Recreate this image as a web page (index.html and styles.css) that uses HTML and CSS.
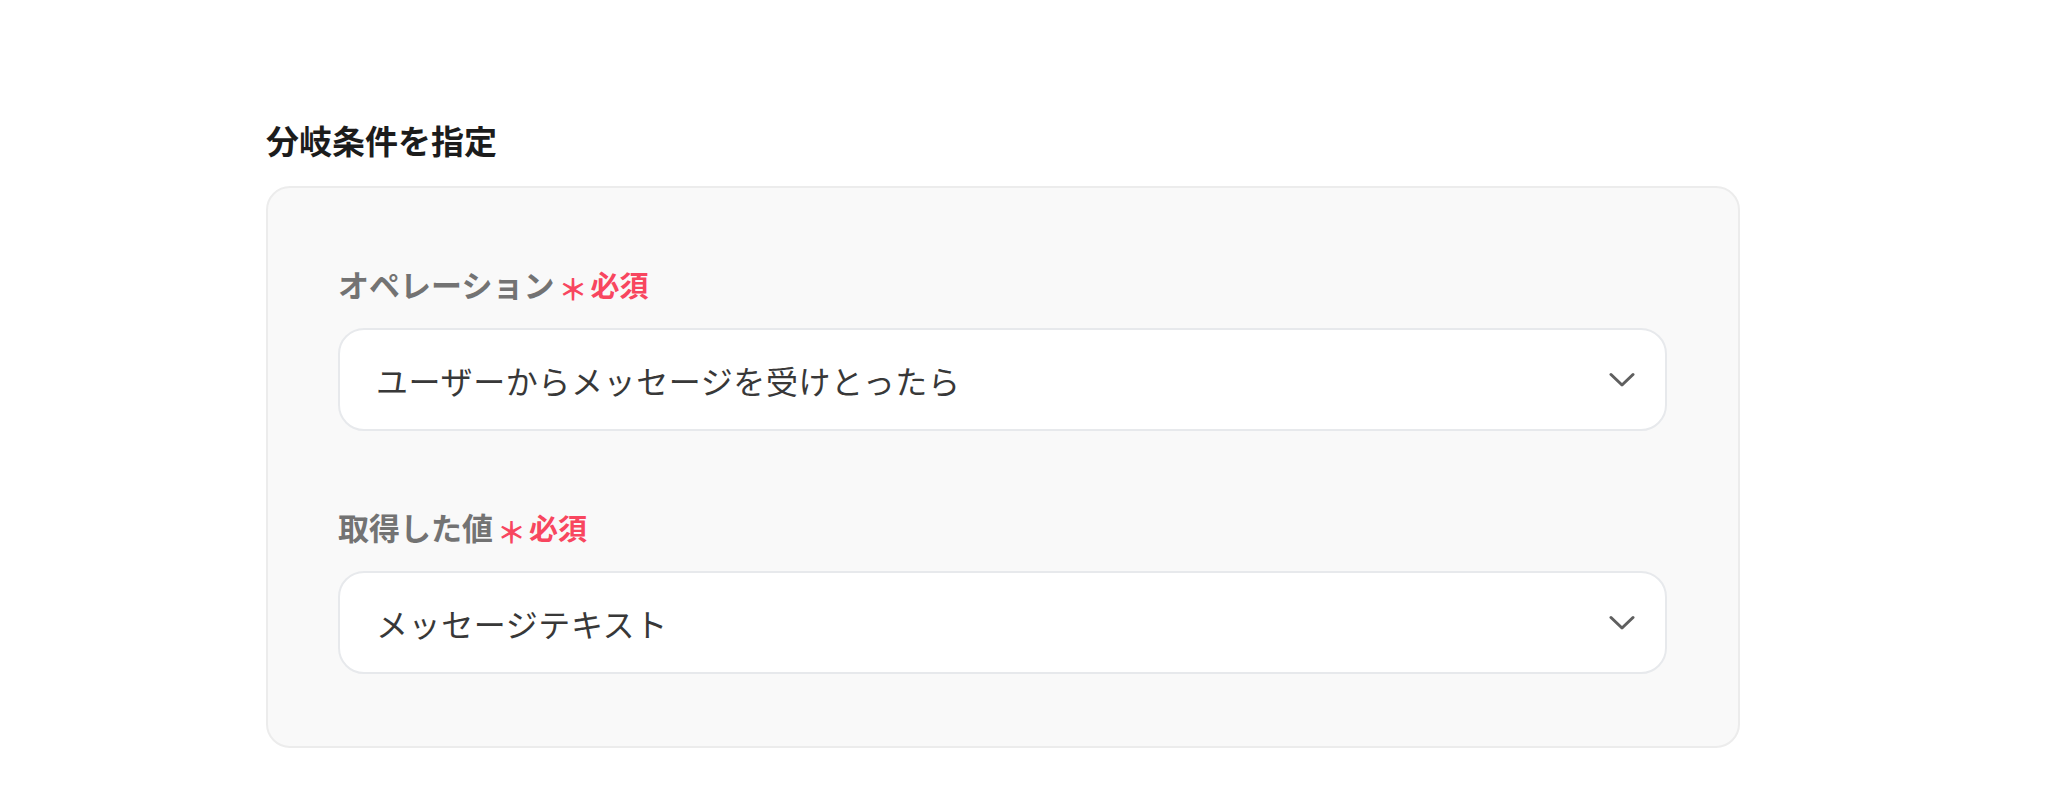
FILE: index.html
```html
<!DOCTYPE html>
<html lang="ja">
<head>
<meta charset="utf-8">
<title>分岐条件を指定</title>
<link rel="stylesheet" href="styles.css">
</head>
<body>
<main class="page">
  <h2 class="section-title">分岐条件を指定</h2>
  <section class="card">
    <div class="field">
      <label class="field-label">オペレーション<span class="req-mark">＊</span><span class="req-text">必須</span></label>
      <div class="select">
        <span class="select-value">ユーザーからメッセージを受けとったら</span>
        <svg class="chevron" width="26" height="16" viewBox="0 0 26 16"><path d="M2 2.5 L13 13 L24 2.5" fill="none" stroke="#5f5f5f" stroke-width="3" stroke-linecap="round" stroke-linejoin="round"/></svg>
      </div>
    </div>
    <div class="field">
      <label class="field-label">取得した値<span class="req-mark">＊</span><span class="req-text">必須</span></label>
      <div class="select">
        <span class="select-value">メッセージテキスト</span>
        <svg class="chevron" width="26" height="16" viewBox="0 0 26 16"><path d="M2 2.5 L13 13 L24 2.5" fill="none" stroke="#5f5f5f" stroke-width="3" stroke-linecap="round" stroke-linejoin="round"/></svg>
      </div>
    </div>
  </section>
</main>
</body>
</html>
```
FILE: styles.css
```css
html, body {
  margin: 0;
  padding: 0;
  background: #ffffff;
}
body {
  font-family: "Noto Sans CJK JP", "Noto Sans", sans-serif;
}
.page {
  padding: 118px 0 0 266px;
  width: 1474px;
}
.section-title {
  margin: 0 0 24px 0;
  font-size: 33px;
  line-height: 44px;
  font-weight: 700;
  color: #1c1c1c;
}
.card {
  box-sizing: border-box;
  width: 1474px;
  background: #f9f9f9;
  border: 2px solid #ececec;
  border-radius: 24px;
  padding: 76px 71px 72px 70px;
  display: flex;
  flex-direction: column;
  gap: 76px;
}
.field {
  display: flex;
  flex-direction: column;
  gap: 24px;
}
.field-label {
  display: flex;
  align-items: center;
  height: 40px;
  font-size: 31px;
  line-height: 40px;
  font-weight: 700;
  color: #737373;
}
.req-mark {
  color: #f8465f;
  font-size: 29px;
  line-height: 1;
  font-weight: 700;
  margin-left: 4px;
  margin-top: 8px;
}
.req-text {
  color: #f8465f;
  font-size: 29px;
  font-weight: 700;
  margin-left: 3px;
}
.select {
  box-sizing: border-box;
  height: 103px;
  background: #ffffff;
  border: 2px solid #e7e9ec;
  border-radius: 26px;
  display: flex;
  align-items: center;
  justify-content: space-between;
  padding: 0 30px 0 36px;
}
.select-value {
  font-size: 32px;
  line-height: 40px;
  color: #383838;
  letter-spacing: 0.6px;
}
.chevron {
  display: block;
}
```
